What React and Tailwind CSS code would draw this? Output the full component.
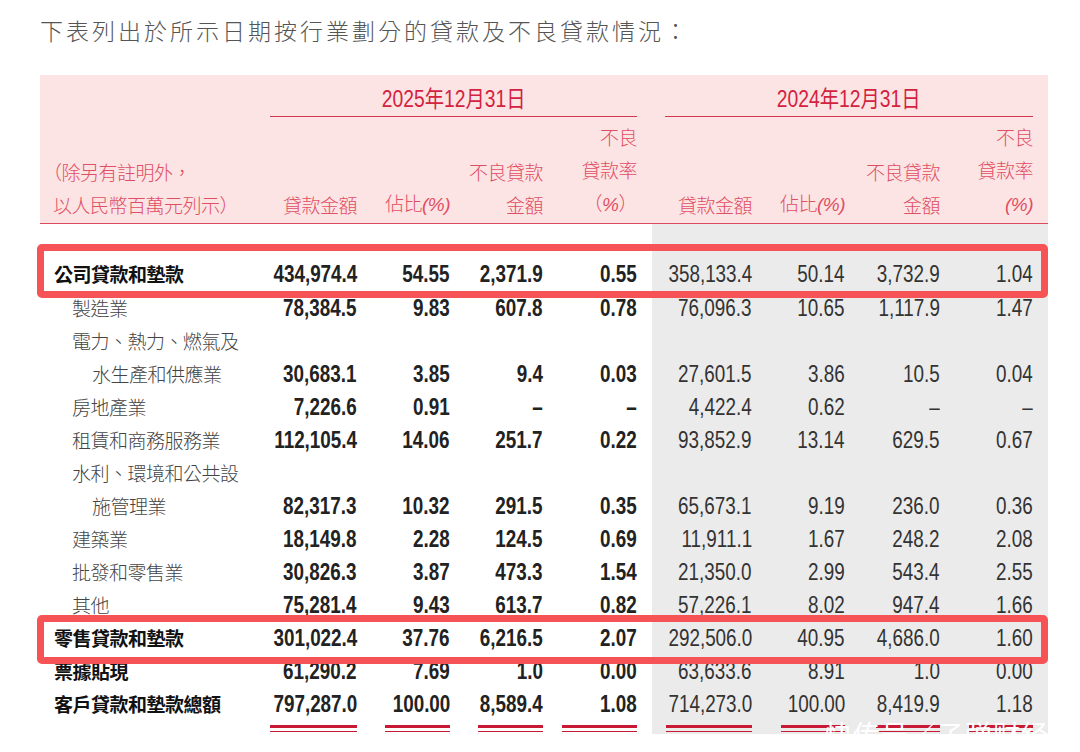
const NUM = "font-['Liberation_Sans','Arimo',sans-serif]";
const CJK = "font-['Noto_Sans_CJK_TC','Noto_Sans_CJK_SC',sans-serif]";
const SQ = "inline-block shrink-0 origin-right scale-x-[0.82]";

const L = ["w-[87px]", "w-[93px]", "w-[93px]", "w-[94px]"];
const R = ["w-[100px]", "w-[93px]", "w-[95px]", "w-[93px]"];
const UL = ["w-[87px]", "w-[65px]", "w-[65px]", "w-[75px]"];
const UR = ["w-[86px]", "w-[64px]", "w-[64px]", "w-[64px]"];

const rows = [
  { label: "公司貸款和墊款", kind: "main", h: "h-[36px]", box: "top-[-12px] bottom-[-6px]",
    a: ["434,974.4", "54.55", "2,371.9", "0.55"], b: ["358,133.4", "50.14", "3,732.9", "1.04"] },
  { label: "製造業", kind: "sub", a: ["78,384.5", "9.83", "607.8", "0.78"], b: ["76,096.3", "10.65", "1,117.9", "1.47"] },
  { label: "電力、熱力、燃氣及", kind: "sub" },
  { label: "水生產和供應業", kind: "subsub", a: ["30,683.1", "3.85", "9.4", "0.03"], b: ["27,601.5", "3.86", "10.5", "0.04"] },
  { label: "房地產業", kind: "sub", a: ["7,226.6", "0.91", "–", "–"], b: ["4,422.4", "0.62", "–", "–"] },
  { label: "租賃和商務服務業", kind: "sub", a: ["112,105.4", "14.06", "251.7", "0.22"], b: ["93,852.9", "13.14", "629.5", "0.67"] },
  { label: "水利、環境和公共設", kind: "sub" },
  { label: "施管理業", kind: "subsub", a: ["82,317.3", "10.32", "291.5", "0.35"], b: ["65,673.1", "9.19", "236.0", "0.36"] },
  { label: "建築業", kind: "sub", a: ["18,149.8", "2.28", "124.5", "0.69"], b: ["11,911.1", "1.67", "248.2", "2.08"] },
  { label: "批發和零售業", kind: "sub", a: ["30,826.3", "3.87", "473.3", "1.54"], b: ["21,350.0", "2.99", "543.4", "2.55"] },
  { label: "其他", kind: "sub", a: ["75,281.4", "9.43", "613.7", "0.82"], b: ["57,226.1", "8.02", "947.4", "1.66"] },
  { label: "零售貸款和墊款", kind: "main", box: "top-[-7px] bottom-[-9px]",
    a: ["301,022.4", "37.76", "6,216.5", "2.07"], b: ["292,506.0", "40.95", "4,686.0", "1.60"] },
  { label: "票據貼現", kind: "main", a: ["61,290.2", "7.69", "1.0", "0.00"], b: ["63,633.6", "8.91", "1.0", "0.00"] },
  { label: "客戶貸款和墊款總額", kind: "main", a: ["797,287.0", "100.00", "8,589.4", "1.08"], b: ["714,273.0", "100.00", "8,419.9", "1.18"] },
];

const labelStyle = {
  main: "pl-[14px] font-bold text-[#111]",
  sub: "pl-[32px] font-light text-[#444]",
  subsub: "pl-[52px] font-light text-[#444]",
};

function Row({ row }) {
  const a = row.a || ["", "", "", ""];
  const b = row.b || ["", "", "", ""];
  return (
    <div className={`relative flex ${row.h || "h-[33px]"}`}>
      <div className="flex w-[612px] items-center">
        <div className={`w-[230px] ${CJK} text-[19px] tracking-[-0.5px] ${labelStyle[row.kind]}`}>{row.label}</div>
        {a.map((v, i) => (
          <div key={i} className={`${L[i]} flex justify-end ${NUM} text-[23px] font-bold text-[#222]`}>
            <span className={SQ}>{v}</span>
          </div>
        ))}
      </div>
      <div className="flex w-[396px] items-center bg-[#ebebeb]">
        {b.map((v, i) => (
          <div key={i} className={`${R[i]} flex justify-end ${NUM} text-[23px] text-[#333]`}>
            <span className={SQ}>{v}</span>
          </div>
        ))}
      </div>
      {row.box && (
        <div className={`pointer-events-none absolute left-[-3px] right-0 z-10 rounded-[5px] border-[7px] border-[#f55356] ${row.box}`} />
      )}
    </div>
  );
}

function HeadCell({ w, lines }) {
  return (
    <div className={`${w} flex flex-col items-end justify-end text-right`}>
      {lines.map((l, i) => (
        <div key={i}>{l}</div>
      ))}
    </div>
  );
}

const pct = <span className={`${NUM} italic`}>(%)</span>;

function DateLabel({ year }) {
  return (
    <span className="inline-block origin-center scale-x-[0.84]">
      {year}<span className={CJK}>年</span>12<span className={CJK}>月</span>31<span className={CJK}>日</span>
    </span>
  );
}

export default function App() {
  return (
    <div className="relative h-[752px] w-[1080px] overflow-hidden bg-white">
      <div className={`pl-[40px] pt-[14px] ${CJK} text-[23px] font-light leading-[32px] tracking-[3px] text-[#555]`}>
        下表列出於所示日期按行業劃分的貸款及不良貸款情況：
      </div>

      <div className="ml-[40px] mt-[29px] w-[1008px]">
        <div className="border-b-[1.5px] border-[#d94a5e] bg-[#fce4e4] pt-[8px]">
          <div className={`flex ${NUM} text-[23px] leading-[28px] text-[#d3223f]`}>
            <div className="w-[230px]" />
            <div className="w-[367px] border-b-[1.5px] border-[#d3384f] pb-[3px] text-center">
              <DateLabel year="2025" />
            </div>
            <div className="w-[28px]" />
            <div className="w-[368px] border-b-[1.5px] border-[#d3384f] pb-[3px] text-center">
              <DateLabel year="2024" />
            </div>
          </div>
          <div className={`flex pb-[2px] pt-[3px] ${CJK} text-[19px] font-light leading-[33px] tracking-[-0.5px] text-[#e04e63]`}>
            <div className="flex w-[230px] flex-col justify-end pl-[3px]">
              <div>（除另有註明外，</div>
              <div className="pl-[10px]">以人民幣百萬元列示）</div>
            </div>
            <HeadCell w="w-[87px]" lines={["貸款金額"]} />
            <HeadCell w="w-[93px]" lines={[<span>佔比{pct}</span>]} />
            <HeadCell w="w-[93px]" lines={["不良貸款", "金額"]} />
            <HeadCell w="w-[94px]" lines={["不良", "貸款率", <span>（<span className={`${NUM} italic`}>%</span>）</span>]} />
            <div className="w-[15px]" />
            <HeadCell w="w-[100px]" lines={["貸款金額"]} />
            <HeadCell w="w-[93px]" lines={[<span>佔比{pct}</span>]} />
            <HeadCell w="w-[95px]" lines={["不良貸款", "金額"]} />
            <HeadCell w="w-[93px]" lines={["不良", "貸款率", pct]} />
          </div>
        </div>

        <div className="flex h-[32px]">
          <div className="w-[612px]" />
          <div className="w-[396px] bg-[#ebebeb]" />
        </div>

        {rows.map((r, i) => (
          <Row key={i} row={r} />
        ))}

        <div className="flex h-[13px]">
          <div className="flex w-[612px] pt-[4px]">
            <div className="w-[230px]" />
            {L.map((w, i) => (
              <div key={i} className={`${w} flex justify-end`}>
                <div className={`${UL[i]} h-[7px] border-t-[3px] border-b border-[#c91a35]`} />
              </div>
            ))}
          </div>
          <div className="flex w-[396px] bg-[#ebebeb] pt-[4px]">
            {R.map((w, i) => (
              <div key={i} className={`${w} flex justify-end`}>
                <div className={`${UR[i]} h-[7px] border-t-[3px] border-b border-[#c91a35]`} />
              </div>
            ))}
          </div>
        </div>
      </div>

      <div className={`absolute left-[825px] top-[719px] z-20 ${CJK} text-[27px] leading-[30px] tracking-[1px] text-white`}>
        快传号／子弹财经
      </div>
    </div>
  );
}
